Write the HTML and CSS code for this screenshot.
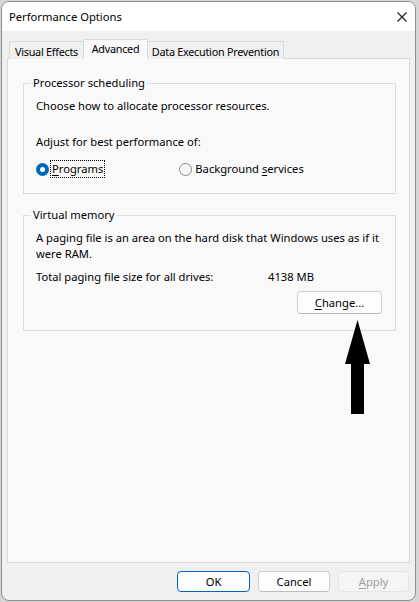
FILE: index.html
```html
<!DOCTYPE html>
<html>
<head>
<meta charset="utf-8">
<link rel="stylesheet" href="styles.css">
</head>
<body>
<div class="window">
  <div class="titlebar">
    <span class="title">Performance Options</span>
    <svg class="close" width="10" height="10" viewBox="0 0 10 10"><path d="M0.5 0.5 L9.5 9.5 M9.5 0.5 L0.5 9.5" stroke="#1a1a1a" stroke-width="1.1" fill="none"/></svg>
  </div>
  <div class="client">
    <div class="tabs">
      <div class="tab tab-ve">Visual Effects</div>
      <div class="tab active tab-adv">Advanced</div>
      <div class="tab tab-dep">Data Execution Prevention</div>
    </div>
    <div class="panel">
      <fieldset class="group group-cpu">
        <legend>Processor scheduling</legend>
        <p class="line">Choose how to allocate processor resources.</p>
        <p class="line gap-lg">Adjust for best performance of:</p>
        <div class="radios">
          <label class="radio-item checked">
            <span class="radio"></span>
            <span class="focus"><u>P</u>rograms</span>
          </label>
          <label class="radio-item second">
            <span class="radio"></span>
            <span>Background <u>s</u>ervices</span>
          </label>
        </div>
      </fieldset>
      <fieldset class="group group-vm">
        <legend>Virtual memory</legend>
        <p class="line">A paging file is an area on the hard disk that Windows uses as if it were RAM.</p>
        <div class="total">
          <span class="total-label">Total paging file size for all drives:</span>
          <span>4138 MB</span>
        </div>
        <div class="change-row">
          <button class="btn change"><u>C</u>hange...</button>
        </div>
      </fieldset>
    </div>
    <div class="buttons">
      <button class="btn default">OK</button>
      <button class="btn">Cancel</button>
      <button class="btn disabled"><u>A</u>pply</button>
    </div>
  </div>
  <svg class="arrow" width="27" height="96" viewBox="0 0 27 96"><path d="M12.5 0 L25 44 L19 44 L19 94 L6 94 L6 44 L0 44 Z" fill="#000"/></svg>
</div>
</body>
</html>
```
FILE: styles.css
```css
* { box-sizing: border-box; }
html, body {
  margin: 0;
  padding: 0;
}
body {
  width: 419px;
  height: 602px;
  background: #d6d6d6;
  padding: 1px 0 0 1px;
  font-family: "Noto Sans", "Open Sans", sans-serif;
  font-size: 11.2px;
  color: #000;
  overflow: hidden;
}
.window {
  position: relative;
  width: 415px;
  height: 600px;
  border: 1px solid #8e8e8e;
  border-radius: 8px;
  overflow: hidden;
  background: #f0f0f0;
  display: flex;
  flex-direction: column;
}
.titlebar {
  height: 29px;
  background: #ffffff;
  display: flex;
  align-items: center;
  justify-content: space-between;
  padding: 0 8px 0 7px;
  flex: none;
}
.title {
  line-height: 16px;
}
.close { display: block; }
.client {
  flex: 1;
  display: flex;
  flex-direction: column;
  padding: 0 5px 0 5px;
}
.tabs {
  display: flex;
  align-items: flex-end;
  height: 28px;
  padding-left: 2px;
  margin-bottom: -1px;
  position: relative;
  z-index: 1;
  flex: none;
}
.tab {
  height: 18px;
  line-height: 17px;
  padding-top: 1px;
  border: 1px solid #d9d9d9;
  border-bottom: none;
  background: #f0f0f0;
  color: #000;
  font-size: 10.8px;
  letter-spacing: -0.25px;
  text-align: center;
  white-space: nowrap;
}
.tab-ve { width: 75px; }
.tab-adv { width: 63px; }
.tab-dep { width: 137px; }
.tab.active {
  height: 20px;
  background: #f9f9f9;
  padding-top: 0;
  line-height: 17px;
  border-left: none;
  border-right: none;
  position: relative;
  z-index: 2;
}
.panel {
  height: 505px;
  background: #f9f9f9;
  border: 1px solid #d9d9d9;
  padding: 16px 12px 0 15px;
  flex: none;
}
.group {
  margin: 0;
  width: 373px;
  border: 1px solid #dcdcdc;
  border-radius: 0;
  padding: 0 12px 0 12px;
}
.group legend {
  padding: 0 2px;
  margin-left: -5px;
  line-height: 16px;
}
.line {
  margin: 0;
  line-height: 16px;
}
.group-cpu { height: 119px; }
.group-cpu .line:first-of-type { margin-top: 7px; }
.gap-lg { margin-top: 20px !important; }
.radios {
  display: flex;
  align-items: center;
  margin-top: 11px;
}
.radio-item {
  display: flex;
  align-items: center;
  line-height: 16px;
}
.radio-item.second { margin-left: 75px; }
.radio {
  width: 13px;
  height: 13px;
  border-radius: 50%;
  border: 1px solid #8a8a8a;
  background: #f6f6f6;
  margin-right: 3px;
  flex: none;
}
.checked .radio {
  border: 4px solid #0067c0;
  background: #ffffff;
  margin-right: 2px;
}
.focus {
  outline: 1px dotted #000;
  outline-offset: 0;
  padding: 0 1px;
}
.group-vm {
  margin-top: 13px;
  height: 124px;
  padding-right: 13px;
}
.group-vm .line { margin-top: 7px; }
.total {
  display: flex;
  margin-top: 7px;
  line-height: 16px;
}
.total-label { width: 232px; flex: none; }
.change-row {
  display: flex;
  justify-content: flex-end;
  margin-top: 6px;
}
.btn {
  font-family: inherit;
  font-size: 11.2px;
  color: #000;
  height: 21px;
  width: 72px;
  padding: 0;
  border: 1px solid #d0d0d0;
  border-bottom-color: #bcbcbc;
  border-radius: 4px;
  background: #fdfdfd;
  line-height: 16px;
}
.btn.change {
  width: 85px;
  height: 23px;
}
.buttons {
  display: flex;
  justify-content: flex-end;
  gap: 8px;
  margin-top: 8px;
  padding-right: 1px;
}
.btn.default {
  border: 1px solid #0067c0;
  width: 73px;
}
.btn.disabled {
  background: #f5f5f5;
  border-color: #e5e5e5;
  color: #9d9d9d;
  width: 71px;
}
u { text-decoration-thickness: 1px; text-underline-offset: 2px; }
.arrow {
  position: absolute;
  left: 343px;
  top: 318px;
}
```
